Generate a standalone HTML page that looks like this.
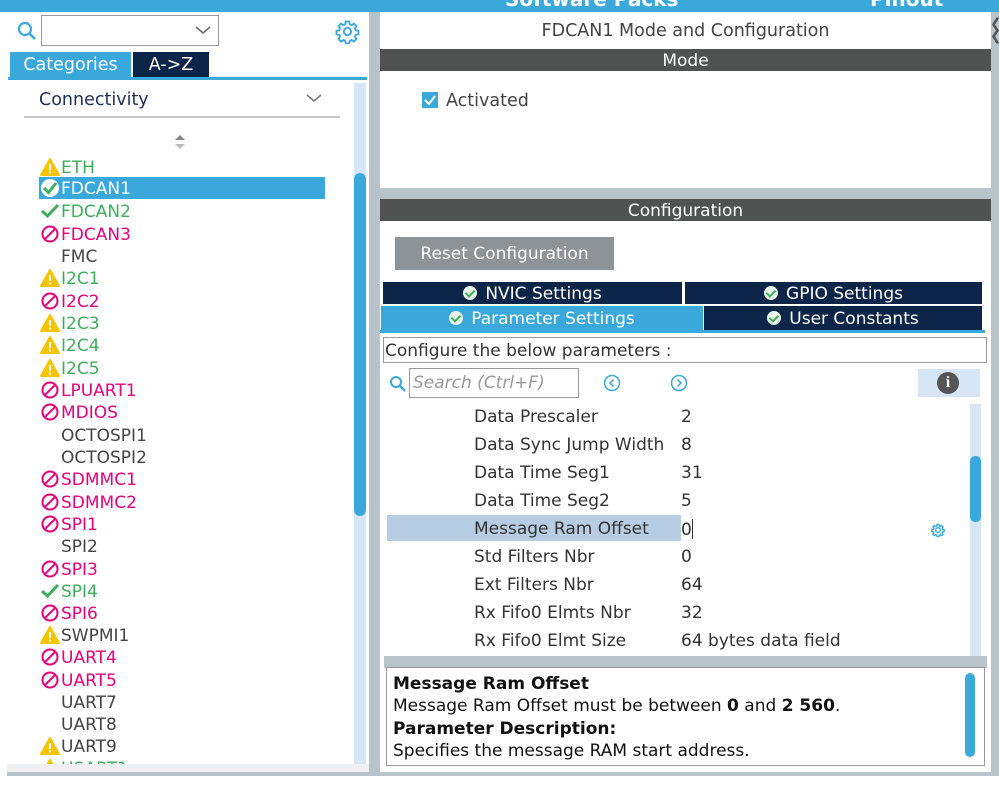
<!DOCTYPE html>
<html><head><meta charset="utf-8"><style>
*{margin:0;padding:0;box-sizing:border-box}
body{width:999px;height:787px;position:relative;background:#fff;font-family:"DejaVu Sans","Liberation Sans",sans-serif;overflow:hidden;color:#333}
.a{position:absolute}
.item{position:absolute;left:40px;height:22px;font-size:17px;line-height:22px;white-space:nowrap;margin-top:2px}
.ic{display:inline-block;width:21px;height:20px;vertical-align:-4px}
.g{color:#3cae5c}.m{color:#e4007c}.k{color:#444}
.p{position:absolute;left:474px;font-size:17px;color:#333;white-space:nowrap;margin-top:1px}
.v{position:absolute;left:681px;font-size:17px;color:#333;white-space:nowrap;margin-top:1px}
.tab{position:absolute;color:#fff;font-size:17px;text-align:center;line-height:24px}
.chk{display:inline-block;width:14px;height:14px;border-radius:50%;background:#e8f5ea;vertical-align:-1px;margin-right:8px;position:relative}
.chk:after{content:"";position:absolute;left:4px;top:2px;width:4px;height:7px;border:solid #3cae5c;border-width:0 2px 2px 0;transform:rotate(45deg)}
</style></head><body>
<div class="a" style="left:0;top:0;width:999px;height:12px;background:#3aa8db;overflow:hidden">
<div class="a" style="left:505px;top:-13px;color:#fff;font-size:20px;font-weight:bold">Software Packs</div>
<div class="a" style="left:870px;top:-13px;color:#fff;font-size:20px;font-weight:bold">Pinout</div>
</div>
<div class="a" style="left:369px;top:12px;width:11px;height:762px;background:#b9c3ca"></div>
<div class="a" style="left:991px;top:12px;width:8px;height:762px;background:#b9c3ca"></div>
<div class="a" style="left:7px;top:772px;width:992px;height:4px;background:#b9c3ca"></div>
<div class="a" style="left:990px;top:18px;width:9px;height:30px;color:#555;font-size:14px;line-height:12px">&#10094;<br>&#10094;</div>
<svg class="a" style="left:16px;top:20px" width="22" height="22" viewBox="0 0 22 22"><circle cx="9" cy="9" r="6" fill="none" stroke="#3aa8db" stroke-width="2.2"/><line x1="13.5" y1="13.5" x2="19" y2="19" stroke="#3aa8db" stroke-width="2.6"/></svg>
<div class="a" style="left:41px;top:15px;width:178px;height:31px;border:1.5px solid #999;background:#fff"></div>
<svg class="a" style="left:195px;top:25px" width="16" height="10"><polyline points="1,2 8,8 15,2" fill="none" stroke="#666" stroke-width="1.5"/></svg>
<svg class="a" style="left:335px;top:19px" width="25" height="25" viewBox="0 0 24 24"><g fill="none" stroke="#3aa8db" stroke-width="1.8"><circle cx="12" cy="12" r="3.5"/><path d="M10.3 2.5h3.4l.5 2.6 1.8.8 2.2-1.5 2.4 2.4-1.5 2.2.8 1.8 2.6.5v3.4l-2.6.5-.8 1.8 1.5 2.2-2.4 2.4-2.2-1.5-1.8.8-.5 2.6h-3.4l-.5-2.6-1.8-.8-2.2 1.5-2.4-2.4 1.5-2.2-.8-1.8-2.6-.5v-3.4l2.6-.5.8-1.8-1.5-2.2 2.4-2.4 2.2 1.5 1.8-.8z"/></g></svg>
<div class="a" style="left:10px;top:52px;width:121px;height:25px;background:#3aa8db;color:#fff;font-size:17.5px;text-align:center;line-height:26px">Categories</div>
<div class="a" style="left:133px;top:52px;width:76px;height:25px;background:#0c2548;color:#fff;font-size:17.5px;text-align:center;line-height:26px">A-&gt;Z</div>
<div class="a" style="left:8px;top:77px;width:359px;height:3px;background:#3aa8db"></div>
<div class="a" style="left:39px;top:90px;font-size:17.5px;color:#1f2d5a">Connectivity</div>
<svg class="a" style="left:306px;top:93px" width="16" height="10"><polyline points="1,2 8,8 15,2" fill="none" stroke="#777" stroke-width="1.5"/></svg>
<div class="a" style="left:24px;top:116px;width:316px;height:2px;background:#c8c8c8"></div>
<svg class="a" style="left:174px;top:134px" width="12" height="16"><polygon points="6,1 11,6 1,6" fill="#888"/><polygon points="6,15 11,10 1,10" fill="#bbb"/></svg>
<div class="a" style="left:354px;top:83px;width:12px;height:686px;background:#d6e6f5"></div>
<div class="a" style="left:354px;top:173px;width:12px;height:343px;background:#3aa8db;border-radius:6px"></div>
<div class="a" style="left:39px;top:177px;width:286px;height:22px;background:#3aa8db"></div>
<div class="a" style="left:7px;top:764px;width:362px;height:8px;background:#eef0f1"></div>
<svg width="0" height="0" style="position:absolute"><defs>
<symbol id="w" viewBox="0 0 21 20"><polygon points="10,2 19,18 1,18" fill="#f5c400" stroke="#f5c400" stroke-linejoin="round" stroke-width="2"/><rect x="9" y="7" width="2" height="6" fill="#fff"/><rect x="9" y="14.5" width="2" height="2" fill="#fff"/></symbol>
<symbol id="n" viewBox="0 0 21 20"><circle cx="10" cy="10" r="7.5" fill="none" stroke="#e4007c" stroke-width="2"/><line x1="4.8" y1="15.2" x2="15.2" y2="4.8" stroke="#e4007c" stroke-width="2"/></symbol>
<symbol id="c" viewBox="0 0 21 20"><polyline points="2,10 7.5,15 18,4" fill="none" stroke="#3cae5c" stroke-width="3"/></symbol>
</defs></svg>
<div class="item g" style="top:155px"><svg class="ic"><use href="#w"/></svg>ETH</div>
<div class="item" style="top:176px;color:#fff"><svg class="ic" viewBox="0 0 21 20"><circle cx="10" cy="10" r="9" fill="#fff"/><polyline points="4,10 8.5,14.5 16,5" fill="none" stroke="#3cae5c" stroke-width="3"/></svg>FDCAN1</div>
<div class="item g" style="top:199px"><svg class="ic"><use href="#c"/></svg>FDCAN2</div>
<div class="item m" style="top:222px"><svg class="ic"><use href="#n"/></svg>FDCAN3</div>
<div class="item k" style="top:244px"><span class="ic"></span>FMC</div>
<div class="item g" style="top:266px"><svg class="ic"><use href="#w"/></svg>I2C1</div>
<div class="item m" style="top:289px"><svg class="ic"><use href="#n"/></svg>I2C2</div>
<div class="item g" style="top:311px"><svg class="ic"><use href="#w"/></svg>I2C3</div>
<div class="item g" style="top:333px"><svg class="ic"><use href="#w"/></svg>I2C4</div>
<div class="item g" style="top:356px"><svg class="ic"><use href="#w"/></svg>I2C5</div>
<div class="item m" style="top:378px"><svg class="ic"><use href="#n"/></svg>LPUART1</div>
<div class="item m" style="top:400px"><svg class="ic"><use href="#n"/></svg>MDIOS</div>
<div class="item k" style="top:423px"><span class="ic"></span>OCTOSPI1</div>
<div class="item k" style="top:445px"><span class="ic"></span>OCTOSPI2</div>
<div class="item m" style="top:467px"><svg class="ic"><use href="#n"/></svg>SDMMC1</div>
<div class="item m" style="top:490px"><svg class="ic"><use href="#n"/></svg>SDMMC2</div>
<div class="item m" style="top:512px"><svg class="ic"><use href="#n"/></svg>SPI1</div>
<div class="item k" style="top:534px"><span class="ic"></span>SPI2</div>
<div class="item m" style="top:557px"><svg class="ic"><use href="#n"/></svg>SPI3</div>
<div class="item g" style="top:579px"><svg class="ic"><use href="#c"/></svg>SPI4</div>
<div class="item m" style="top:601px"><svg class="ic"><use href="#n"/></svg>SPI6</div>
<div class="item k" style="top:623px"><svg class="ic"><use href="#w"/></svg>SWPMI1</div>
<div class="item m" style="top:645px"><svg class="ic"><use href="#n"/></svg>UART4</div>
<div class="item m" style="top:668px"><svg class="ic"><use href="#n"/></svg>UART5</div>
<div class="item k" style="top:690px"><span class="ic"></span>UART7</div>
<div class="item k" style="top:712px"><span class="ic"></span>UART8</div>
<div class="item k" style="top:734px"><svg class="ic"><use href="#w"/></svg>UART9</div>
<div class="a" style="left:40px;top:758px;width:300px;height:6px;overflow:hidden"><div class="item g" style="left:0;top:0;margin-top:0"><svg class="ic"><use href="#w"/></svg>USART1</div></div>
<div class="a" style="left:380px;top:21px;width:611px;text-align:center;font-size:17.5px;color:#444">FDCAN1 Mode and Configuration</div>
<div class="a" style="left:380px;top:49px;width:611px;height:22px;background:#505352;color:#fff;font-size:17px;text-align:center;line-height:24px">Mode</div>
<div class="a" style="left:422px;top:92px;width:16px;height:16px;background:#3aa8db"></div>
<svg class="a" style="left:422px;top:92px" width="16" height="16"><polyline points="3,8 7,12 13,4" fill="none" stroke="#fff" stroke-width="2"/></svg>
<div class="a" style="left:446px;top:91px;font-size:17.5px;color:#444">Activated</div>
<div class="a" style="left:380px;top:188px;width:611px;height:11px;background:#b9c3ca"></div>
<div class="a" style="left:380px;top:199px;width:611px;height:22px;background:#505352;color:#fff;font-size:17px;text-align:center;line-height:24px">Configuration</div>
<div class="a" style="left:395px;top:237px;width:219px;height:33px;background:#8d9396;color:#fff;font-size:17px;line-height:35px;text-align:center">Reset Configuration</div>
<div class="tab" style="left:383px;top:282px;width:299px;height:22px;background:#0c2548"><span class="chk"></span>NVIC Settings</div>
<div class="tab" style="left:685px;top:282px;width:297px;height:22px;background:#0c2548"><span class="chk"></span>GPIO Settings</div>
<div class="tab" style="left:381px;top:306px;width:322px;height:25px;background:#3aa8db;line-height:26px"><span class="chk"></span>Parameter Settings</div>
<div class="tab" style="left:704px;top:306px;width:278px;height:24px;background:#0c2548;line-height:26px"><span class="chk"></span>User Constants</div>
<div class="a" style="left:380px;top:330px;width:605px;height:3px;background:#3aa8db"></div>
<div class="a" style="left:383px;top:337px;width:604px;height:26px;border:1.5px solid #999;font-size:17px;line-height:26px;padding-left:1px;color:#333">Configure the below parameters :</div>
<svg class="a" style="left:389px;top:375px" width="18" height="18"><circle cx="7" cy="7" r="5" fill="none" stroke="#3aa8db" stroke-width="2"/><line x1="11" y1="11" x2="16" y2="16" stroke="#3aa8db" stroke-width="2.4"/></svg>
<div class="a" style="left:409px;top:368px;width:170px;height:30px;border:1.5px solid #999;font-size:17px;font-style:italic;color:#999;line-height:29px;padding-left:3px">Search (Ctrl+F)</div>
<svg class="a" style="left:603px;top:374px" width="18" height="18"><circle cx="9" cy="9" r="7.5" fill="none" stroke="#3aa8db" stroke-width="1.5"/><polyline points="10.5,5.5 7,9 10.5,12.5" fill="none" stroke="#3aa8db" stroke-width="1.5"/></svg>
<svg class="a" style="left:670px;top:374px" width="18" height="18"><circle cx="9" cy="9" r="7.5" fill="none" stroke="#3aa8db" stroke-width="1.5"/><polyline points="7.5,5.5 11,9 7.5,12.5" fill="none" stroke="#3aa8db" stroke-width="1.5"/></svg>
<div class="a" style="left:918px;top:369px;width:62px;height:28px;background:#d6e6f5"></div>
<div class="a" style="left:937px;top:372px;width:22px;height:22px;border-radius:50%;background:#555;color:#fff;font-weight:bold;font-size:16px;text-align:center;line-height:22px;font-family:'Liberation Serif',serif">i</div>
<div class="a" style="left:970px;top:404px;width:11px;height:252px;background:#d6e6f5"></div>
<div class="a" style="left:970px;top:456px;width:11px;height:66px;background:#3aa8db;border-radius:5px"></div>
<div class="a" style="left:387px;top:515px;width:294px;height:26px;background:#b7cde4"></div>
<div class="p" style="top:406px">Data Prescaler</div><div class="v" style="top:406px">2</div>
<div class="p" style="top:434px">Data Sync Jump Width</div><div class="v" style="top:434px">8</div>
<div class="p" style="top:462px">Data Time Seg1</div><div class="v" style="top:462px">31</div>
<div class="p" style="top:490px">Data Time Seg2</div><div class="v" style="top:490px">5</div>
<div class="p" style="top:518px">Message Ram Offset</div><div class="v" style="top:518px">0<span style="display:inline-block;width:1px;height:20px;background:#333;vertical-align:-4px"></span></div>
<svg class="a" style="left:931px;top:523px" width="14" height="14" viewBox="0 0 24 24"><g fill="none" stroke="#3aa8db" stroke-width="2.5"><circle cx="12" cy="12" r="4"/><path d="M10.3 2.5h3.4l.5 2.6 1.8.8 2.2-1.5 2.4 2.4-1.5 2.2.8 1.8 2.6.5v3.4l-2.6.5-.8 1.8 1.5 2.2-2.4 2.4-2.2-1.5-1.8.8-.5 2.6h-3.4l-.5-2.6-1.8-.8-2.2 1.5-2.4-2.4 1.5-2.2-.8-1.8-2.6-.5v-3.4l2.6-.5.8-1.8-1.5-2.2 2.4-2.4 2.2 1.5 1.8-.8z"/></g></svg>
<div class="p" style="top:546px">Std Filters Nbr</div><div class="v" style="top:546px">0</div>
<div class="p" style="top:574px">Ext Filters Nbr</div><div class="v" style="top:574px">64</div>
<div class="p" style="top:602px">Rx Fifo0 Elmts Nbr</div><div class="v" style="top:602px">32</div>
<div class="p" style="top:630px">Rx Fifo0 Elmt Size</div><div class="v" style="top:630px">64 bytes data field</div>
<div class="a" style="left:384px;top:656px;width:603px;height:12px;background:#b9c3ca"></div>
<div class="a" style="left:386px;top:667px;width:599px;height:99px;border:1.5px solid #999;background:#fff;overflow:hidden;padding:5px 0 0 6px;font-size:17px;line-height:22.3px;color:#111">
<b>Message Ram Offset</b><br>Message Ram Offset must be between <b>0</b> and <b>2 560</b>.<br><b>Parameter Description:</b><br>Specifies the message RAM start address.</div>
<div class="a" style="left:965px;top:673px;width:10px;height:84px;background:#3aa8db;border-radius:5px"></div>
</body></html>
